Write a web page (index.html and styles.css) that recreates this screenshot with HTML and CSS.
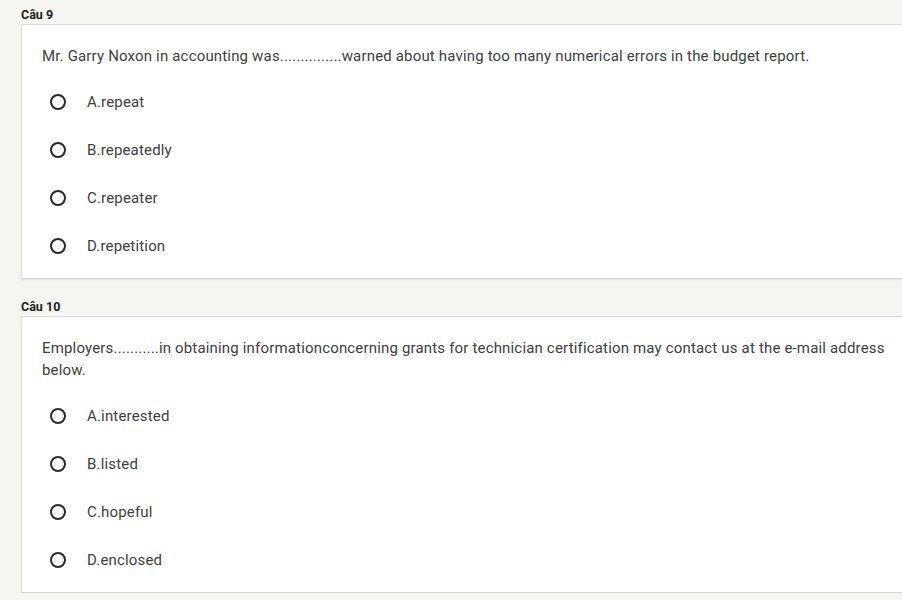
FILE: index.html
```html
<!DOCTYPE html>
<html>
<head>
<meta charset="utf-8">
<link rel="stylesheet" href="styles.css">
</head>
<body>
<div class="page">
  <section class="question">
    <div class="qlabel">Câu 9</div>
    <div class="card">
      <div class="qtext">Mr. Garry Noxon in accounting was...............warned about having too many numerical errors in the budget report.</div>
      <div class="options">
        <label class="opt"><span class="radio"></span><span class="otext">A.repeat</span></label>
        <label class="opt"><span class="radio"></span><span class="otext">B.repeatedly</span></label>
        <label class="opt"><span class="radio"></span><span class="otext">C.repeater</span></label>
        <label class="opt"><span class="radio"></span><span class="otext">D.repetition</span></label>
      </div>
    </div>
  </section>
  <section class="question">
    <div class="qlabel">Câu 10</div>
    <div class="card">
      <div class="qtext">Employers...........in obtaining informationconcerning grants for technician certification may contact us at the e-mail address below.</div>
      <div class="options">
        <label class="opt"><span class="radio"></span><span class="otext">A.interested</span></label>
        <label class="opt"><span class="radio"></span><span class="otext">B.listed</span></label>
        <label class="opt"><span class="radio"></span><span class="otext">C.hopeful</span></label>
        <label class="opt"><span class="radio"></span><span class="otext">D.enclosed</span></label>
      </div>
    </div>
  </section>
</div>
</body>
</html>
```
FILE: styles.css
```css
html, body {
  margin: 0;
  padding: 0;
  background: #f5f5f2;
  overflow: hidden;
}
body {
  font-family: Roboto, "Liberation Sans", sans-serif;
  color: #3c3c3c;
}
.page {
  padding: 7px 0 0 21px;
  display: flex;
  flex-direction: column;
  gap: 20px;
  width: 920px;
}
.qlabel {
  font-size: 12.5px;
  font-weight: 700;
  line-height: 16px;
  color: #222;
  margin-bottom: 1px;
}
.card {
  background: #fff;
  border-top: 1px solid #dcdcdc;
  border-left: 1px solid #e2e2e2;
  border-bottom: 1px solid #d6d6d6;
  box-shadow: 0 1px 2px rgba(0,0,0,0.08);
  padding: 20px 20px 8px 20px;
}
.qtext {
  font-size: 15px;
  line-height: 22px;
  letter-spacing: 0.17px;
  color: #404040;
  width: 860px;
}
.options {
  margin-top: 11px;
  display: flex;
  flex-direction: column;
}
.opt {
  height: 48px;
  display: flex;
  align-items: center;
  padding-left: 8px;
}
.radio {
  width: 12px;
  height: 12px;
  border: 2px solid #2b2b2b;
  border-radius: 50%;
  flex: none;
}
.otext {
  margin-left: 21px;
  font-size: 15px;
  letter-spacing: 0.17px;
  color: #404040;
}
```
